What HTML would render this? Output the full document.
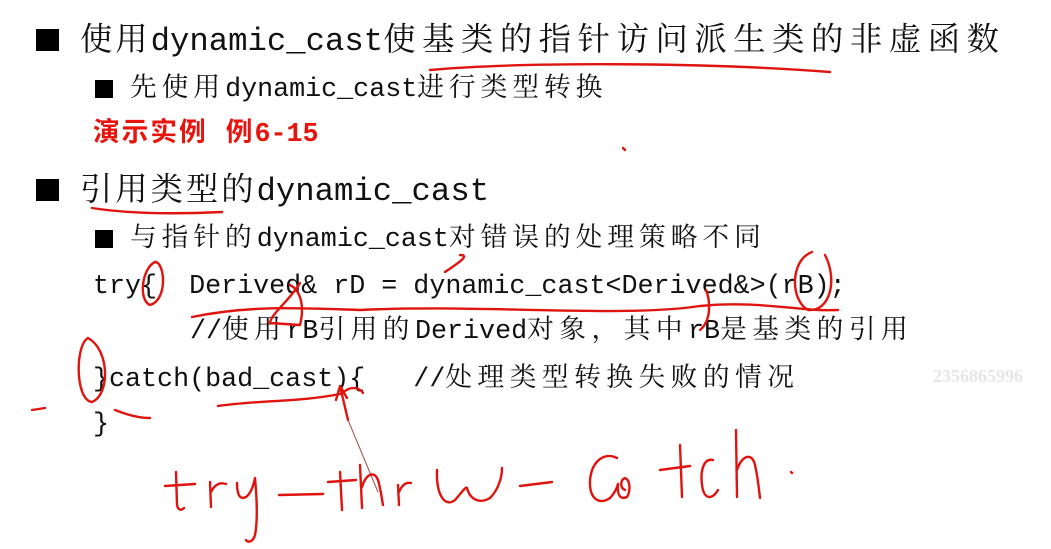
<!DOCTYPE html>
<html><head><meta charset="utf-8"><style>
html,body{margin:0;padding:0;background:#fff;width:1051px;height:549px;overflow:hidden;position:relative}
.l{position:absolute;white-space:pre;font-family:"Liberation Mono","Noto Serif CJK SC",monospace;color:#111;line-height:1}
.b{font-size:32.3px}
.s{font-size:26.7px}
.b .c{letter-spacing:6.6px}
.b .c0{letter-spacing:3px}
.s .c{letter-spacing:5px}
.s .k{letter-spacing:5.5px}
.sq{position:absolute;background:#000}
.red{color:#e8150f;font-weight:bold;font-family:"Liberation Mono","Noto Sans CJK SC",monospace}
svg{position:absolute;left:0;top:0}
.wm{position:absolute;left:933px;top:366px;font-family:"Liberation Serif",serif;font-size:18px;color:#e6e6e6;font-weight:bold}
</style></head><body>
<div class="sq" style="left:36px;top:29px;width:23px;height:22px"></div>
<div class="l b" style="left:80px;top:26px"><span class="c0">使用</span>dynamic_cast<span class="c">使基类的指针访问派生类的非虚函数</span></div>
<div class="sq" style="left:95px;top:80px;width:18px;height:18px"></div>
<div class="l s" style="left:130px;top:77px"><span class="c">先使用</span>dynamic_cast<span class="c">进行类型转换</span></div>
<div class="l s red" style="left:93px;top:122px"><span style="letter-spacing:2px">演示实例 例</span>6-15</div>
<div class="sq" style="left:36px;top:179px;width:23px;height:22px"></div>
<div class="l b" style="left:80px;top:176px"><span class="c0">引用类型的</span>dynamic_cast</div>
<div class="sq" style="left:95px;top:230px;width:18px;height:18px"></div>
<div class="l s" style="left:130px;top:227px"><span class="c">与指针的</span>dynamic_cast<span class="c">对错误的处理策略不同</span></div>
<div class="l s" style="left:93px;top:274px">try{  Derived&amp; rD = dynamic_cast&lt;Derived&amp;&gt;(rB);</div>
<div class="l s" style="left:190px;top:319px">//<span class="k">使用</span>rB<span class="k">引用的</span>Derived<span class="k">对象，其中</span>rB<span class="k">是基类的引用</span></div>
<div class="l s" style="left:93px;top:367px">}catch(bad_cast){   //<span class="k">处理类型转换失败的情况</span></div>
<div class="l s" style="left:93px;top:412px">}</div>
<div class="wm">2356865996</div>
<svg width="1051" height="549" fill="none" stroke="#e0140f" stroke-width="2.4" stroke-linecap="round" stroke-linejoin="round">
<path d="M430 70 C520 62 700 62 830 72"/>
<path d="M92 208 C130 214 180 214 222 212"/>
<path d="M155 262 C142 268 138 300 150 305 C168 300 165 262 155 262"/>
<path d="M192 317 C250 305 300 308 360 310 C480 304 620 318 700 306 C760 300 800 312 838 310"/>
<path d="M300 283 C290 300 270 315 270 323 L300 325 C305 305 300 290 290 285"/>
<path d="M445 272 C460 262 470 255 460 255"/>
<path d="M812 252 C790 260 790 300 808 310 C830 312 838 280 825 255"/>
<path d="M706 290 C710 300 712 320 700 330"/>
<path d="M88 338 C75 345 75 400 92 402 C110 395 110 350 88 338"/>
<path d="M115 410 C130 416 140 418 150 418"/>
<path d="M218 406 C260 400 300 402 340 394"/>
<path d="M340 386 L348 420 M340 386 L336 400 M340 386 L347 398"/>
<path d="M348 420 L378 492" stroke-width="1" stroke="#a05050"/>
<path d="M345 391 C352 386 360 388 363 393"/>
<path d="M32 410 L45 408"/>
<path d="M623 148 l2 2"/>
<!-- try -->
<path d="M176 472 L177 505 C178 510 181 511 184 508 M165 486 L195 484"/>
<path d="M210 482 L211 507 M211 492 C215 484 220 482 226 484"/>
<path d="M237 483 C237 495 240 500 246 497 C250 494 253 488 255 478 C257 500 258 520 255 535 C253 542 248 543 246 540"/>
<path d="M279 495 L323 494"/>
<!-- throw -->
<path d="M340 472 L342 510 M328 482 L356 480"/>
<path d="M360 465 L362 508 M362 487 C366 474 374 470 378 480 C381 490 382 500 383 505"/>
<path d="M398 485 L399 505 M399 492 C402 485 406 482 411 483"/>
<path d="M437 470 C436 495 445 508 455 500 C462 492 466 486 467 488 C470 500 480 504 490 498 C498 490 502 478 502 468"/>
<path d="M520 486 L552 482"/>
<!-- catch -->
<path d="M617 458 C605 452 592 460 590 480 C589 500 600 505 610 498 C614 494 617 488 618 484"/>
<path d="M618 484 C617 495 620 500 627 497 C631 490 630 480 625 478 C620 480 620 488 625 490"/>
<path d="M680 445 L682 497 M660 470 L690 466"/>
<path d="M713 460 C704 458 700 470 702 485 C704 500 712 500 718 490"/>
<path d="M736 430 L737 497 M737 470 C742 455 752 452 755 465 C758 478 759 490 760 498"/>
<path d="M791 472 l1 1"/>
</svg>
</body></html>
